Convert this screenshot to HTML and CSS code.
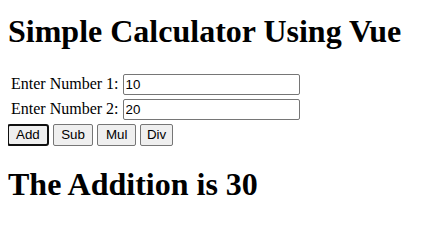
FILE: index.html
```html
<!DOCTYPE html>
<html>
<head>
<meta charset="utf-8">
<link rel="stylesheet" href="styles.css">
</head>
<body>
<div class="app">
<h1 class="title">Simple Calculator Using Vue</h1>
<table class="form">
<tr><td>Enter Number 1:</td><td><input class="num" type="text" value="10"></td></tr>
<tr><td>Enter Number 2:</td><td><input class="num" type="text" value="20"></td></tr>
</table>
<div class="ops">
<button class="op op-active">Add</button>
<button class="op">Sub</button>
<button class="op">Mul</button>
<button class="op op-narrow">Div</button>
</div>
<h1 class="result">The Addition is 30</h1>
</div>
</body>
</html>
```
FILE: styles.css
```css
body {
  margin: 0 8px 8px;
  font-family: "Liberation Serif", "Times New Roman", serif;
}
.title, .result {
  font-family: "Liberation Serif", serif;
}
.title {
  margin-top: 12.5px;
}
.result {
  margin-top: 20px;
}
.num {
  width: 177px;
  box-sizing: border-box;
  height: 21px;
  border: 1px solid #767676;
  border-radius: 2px;
  padding: 1px 2px;
  font-family: "Liberation Sans", Arial, sans-serif;
  font-size: 13.33px;
}
.ops {
  display: flex;
  gap: 4px;
  margin-top: 1px;
  margin-left: -1px;
}
.op {
  box-sizing: border-box;
  font-family: "Liberation Sans", Arial, sans-serif;
  font-size: 13.33px;
  height: 22px;
  padding: 1px 7.5px;
  border: 1px solid #767676;
  border-radius: 2px;
  background: #efefef;
  color: #000;
}
.op-active {
  padding: 1px 7px;
  border: 2px solid #101010;
  border-radius: 3px;
}
.op-narrow {
  padding: 1px 6px;
}
```
